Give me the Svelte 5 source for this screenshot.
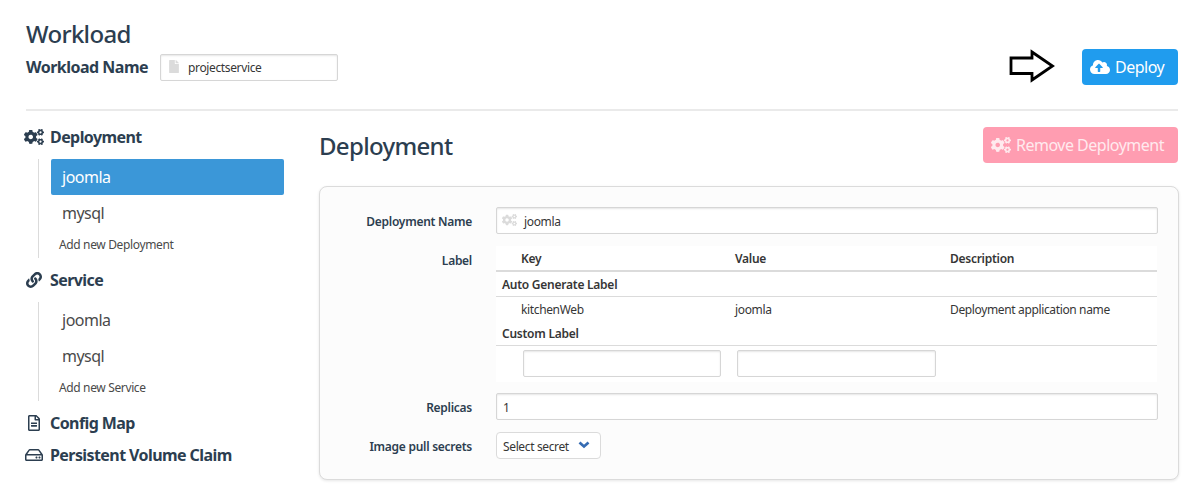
<script>
  const groups = [
    { title: 'Deployment', icon: 'cogs', items: ['joomla', 'mysql'], active: 0 },
    { title: 'Service', icon: 'link', items: ['joomla', 'mysql'], active: -1 }
  ];
</script>

{#snippet cogs()}
  <svg class="cogs" viewBox="0 0 640 512" fill="currentColor" aria-hidden="true">
    {#each [0, 300] as dy}
      <path transform="translate(0 {dy})" d="M512.1 191l-8.2 14.3c-3 5.3-9.4 7.5-15.1 5.4-11.8-4.4-22.6-10.7-32.1-18.6-4.6-3.8-5.8-10.5-2.8-15.7l8.200-14.300c-6.900-8-12.300-17.300-15.900-27.400h-16.500c-6 0-11.200-4.300-12.200-10.300-2-12-2.100-24.600 0-37.100 1-6 6.200-10.400 12.200-10.400h16.500c3.600-10.100 9-19.400 15.900-27.400l-8.200-14.300c-3-5.200-1.900-11.900 2.800-15.700 9.500-7.900 20.400-14.200 32.100-18.600 5.700-2.100 12.100.1 15.100 5.400l8.200 14.300c10.500-1.900 21.200-1.900 31.700 0L552 6.300c3-5.300 9.400-7.500 15.100-5.400 11.800 4.400 22.600 10.700 32.100 18.600 4.600 3.800 5.800 10.500 2.800 15.700l-8.200 14.300c6.900 8 12.300 17.300 15.900 27.400h16.500c6 0 11.200 4.300 12.200 10.300 2 12 2.100 24.600 0 37.100-1 6-6.200 10.400-12.200 10.400h-16.500c-3.600 10.100-9 19.400-15.900 27.400l8.200 14.300c3 5.200 1.900 11.900-2.800 15.700-9.500 7.900-20.400 14.200-32.100 18.600-5.700 2.100-12.100-.1-15.100-5.400l-8.200-14.300c-10.400 1.900-21.200 1.900-31.700 0zm-10.500-58.800c38.500 29.600 82.400-14.300 52.800-52.800-38.500-29.700-82.400 14.300-52.800 52.800z" />
    {/each}
    <path d="M386.300 286.100l33.700 16.800c10.100 5.800 14.500 18.100 10.500 29.100-8.900 24.200-26.400 46.400-42.600 65.800-7.400 8.900-20.200 11.100-30.300 5.300l-29.100-16.800c-16 13.700-34.600 24.600-54.900 31.700v33.600c0 11.600-8.300 21.600-19.700 23.600-24.600 4.200-50.400 4.400-75.900 0-11.500-2-20-11.900-20-23.600V418c-20.300-7.200-38.900-18-54.900-31.700L74 403c-10 5.800-22.900 3.600-30.300-5.300-16.200-19.400-33.300-41.600-42.200-65.700-4-10.900.4-23.200 10.500-29.100l33.300-16.800c-3.900-20.900-3.900-42.400 0-63.400L12 205.800c-10.100-5.800-14.600-18.100-10.500-29 8.900-24.200 26-46.400 42.200-65.800 7.400-8.900 20.200-11.100 30.300-5.300l29.100 16.800c16-13.700 34.600-24.600 54.900-31.700V57.100c0-11.500 8.200-21.500 19.600-23.500 24.600-4.200 50.500-4.400 76-.1 11.500 2 20 11.900 20 23.600v33.600c20.300 7.200 38.900 18 54.900 31.700l29.100-16.800c10-5.800 22.900-3.600 30.300 5.300 16.200 19.400 33.200 41.600 42.100 65.800 4 10.900.1 23.200-10 29.100l-33.700 16.800c3.900 21 3.900 42.500 0 63.500zm-117.600 21.100c59.200-77-28.700-164.900-105.700-105.700-59.200 77 28.700 164.900 105.700 105.700z" />
  </svg>
{/snippet}

{#snippet link()}
  <svg class="link" viewBox="0 0 512 512" fill="currentColor" aria-hidden="true">
    <path d="M326.612 185.391c59.747 59.809 58.927 155.698.36 214.590-.11.12-.24.25-.36.37l-67.200 67.200c-59.270 59.270-155.699 59.262-214.960 0-59.270-59.260-59.270-155.700 0-214.960l37.106-37.106c9.840-9.840 26.786-3.300 27.294 10.606.648 17.722 3.826 35.527 9.690 52.721 1.986 5.822.567 12.262-3.783 16.612l-13.087 13.087c-28.026 28.026-28.905 73.660-1.155 101.960 28.024 28.579 74.086 28.749 102.325.51l67.200-67.190c28.191-28.191 28.073-73.757 0-101.830-3.701-3.694-7.429-6.564-10.341-8.569a16.037 16.037 0 0 1-6.947-12.606c-.396-10.567 3.348-21.456 11.698-29.806l21.054-21.055c5.521-5.521 14.182-6.199 20.584-1.731a152.482 152.482 0 0 1 20.522 17.197zM467.547 44.449c-59.261-59.262-155.690-59.270-214.960 0l-67.200 67.200c-.12.12-.25.25-.36.37-58.566 58.892-59.387 154.781.36 214.590a152.454 152.454 0 0 0 20.521 17.196c6.402 4.468 15.064 3.789 20.584-1.731l21.054-21.055c8.350-8.350 12.094-19.239 11.698-29.806a16.037 16.037 0 0 0-6.947-12.606c-2.912-2.005-6.640-4.875-10.341-8.569-28.073-28.073-28.191-73.639 0-101.830l67.200-67.190c28.239-28.239 74.300-28.069 102.325.51 27.750 28.300 26.872 73.934-1.155 101.960l-13.087 13.087c-4.350 4.350-5.769 10.790-3.783 16.612 5.864 17.194 9.042 34.999 9.690 52.721.509 13.906 17.454 20.446 27.294 10.606l37.106-37.106c59.271-59.259 59.271-155.699.001-214.959z" />
  </svg>
{/snippet}

<div class="page">
  <header>
    <div class="intro">
      <h1>Workload</h1>
      <div class="name-row">
        <span class="name-label">Workload Name</span>
        <div class="field short">
          <svg class="file" viewBox="0 0 384 512" fill="currentColor" aria-hidden="true">
            <path d="M224 136V0H24C10.700 0 0 10.700 0 24v464c0 13.300 10.700 24 24 24h336c13.300 0 24-10.700 24-24V160H248c-13.200 0-24-10.800-24-24zm160-14.100v6.100H256V0h6.100c6.400 0 12.500 2.500 17 7l97.900 98c4.500 4.500 7 10.600 7 16.900z" />
          </svg>
          <span>projectservice</span>
        </div>
      </div>
    </div>
    <svg class="arrow" viewBox="0 0 46 34" aria-hidden="true">
      <path d="M2 9H23V3L43.500 17L23 31V24.500H2Z" fill="#fff" stroke="#000" stroke-width="2.800" />
    </svg>
    <button class="btn deploy">
      <svg class="cloud" viewBox="0 0 640 512" fill="currentColor" aria-hidden="true">
        <path d="M537.600 226.600c4.100-10.700 6.400-22.400 6.400-34.600 0-53-43-96-96-96-19.700 0-38.100 6-53.300 16.200C367 64.200 315.300 32 256 32c-88.400 0-160 71.600-160 160 0 2.700.1 5.400.2 8.100C40.200 219.800 0 273.200 0 336c0 79.500 64.500 144 144 144h368c70.700 0 128-57.300 128-128 0-61.900-44-113.600-102.400-125.400zM393.400 288H328v112c0 8.800-7.200 16-16 16h-48c-8.800 0-16-7.200-16-16V288h-65.400c-14.300 0-21.400-17.200-11.300-27.300l105.400-105.400c6.200-6.200 16.400-6.200 22.600 0l105.400 105.400c10.100 10.100 2.900 27.300-11.300 27.300z" />
      </svg>
      <span>Deploy</span>
    </button>
  </header>

  <div class="columns">
    <nav>
      {#each groups as group}
        <div class="heading">
          <span class="icon">{#if group.icon === 'cogs'}{@render cogs()}{:else}{@render link()}{/if}</span>
          <span>{group.title}</span>
        </div>
        <div class="group">
          {#each group.items as item, i}
            <div class="item" class:active={i === group.active}>{item}</div>
          {/each}
          <div class="add">Add new {group.title}</div>
        </div>
      {/each}
      <div class="heading">
        <span class="icon">
          <svg class="doc" viewBox="0 0 384 512" fill="currentColor" aria-hidden="true">
            <path d="M288 248v28c0 6.600-5.400 12-12 12H108c-6.600 0-12-5.400-12-12v-28c0-6.600 5.400-12 12-12h168c6.600 0 12 5.400 12 12zm-12 72H108c-6.600 0-12 5.400-12 12v28c0 6.600 5.400 12 12 12h168c6.600 0 12-5.400 12-12v-28c0-6.600-5.400-12-12-12zm108-188.100V464c0 26.500-21.500 48-48 48H48c-26.500 0-48-21.500-48-48V48C0 21.500 21.500 0 48 0h204.100C264.800 0 277 5.100 286 14.100L369.900 98c9 8.900 14.100 21.200 14.100 33.900zm-128-80V128h76.100L256 51.900zM336 464V176H232c-13.300 0-24-10.700-24-24V48H48v416h288z" />
          </svg>
        </span>
        <span>Config Map</span>
      </div>
      <div class="heading">
        <span class="icon">
          <svg class="disk" viewBox="0 0 576 512" fill="currentColor" aria-hidden="true">
            <path d="M567.403 235.642L462.323 84.589A48 48 0 0 0 422.919 64H153.081a48 48 0 0 0-39.404 20.589L8.597 235.642A48.001 48.001 0 0 0 0 263.054V400c0 26.510 21.490 48 48 48h480c26.510 0 48-21.490 48-48V263.054c0-9.801-3-19.366-8.597-27.412zM153.081 112h269.838l77.913 112H75.168l77.913-112zM528 400H48V272h480v128zm-32-64c0 17.673-14.327 32-32 32s-32-14.327-32-32 14.327-32 32-32 32 14.327 32 32zm-96 0c0 17.673-14.327 32-32 32s-32-14.327-32-32 14.327-32 32-32 32 14.327 32 32z" />
          </svg>
        </span>
        <span>Persistent Volume Claim</span>
      </div>
    </nav>

    <main>
      <div class="title-row">
        <h1>Deployment</h1>
        <button class="btn remove">{@render cogs()}<span>Remove Deployment</span></button>
      </div>
      <section class="panel">
        <div class="row">
          <div class="label">Deployment Name</div>
          <div class="field wide">{@render cogs()}<span>joomla</span></div>
        </div>
        <div class="row table-row">
          <div class="label">Label</div>
          <div class="table">
            <div class="cells head"><span>Key</span><span>Value</span><span>Description</span></div>
            <div class="section auto">Auto Generate Label</div>
            <div class="cells data"><span>kitchenWeb</span><span>joomla</span><span>Deployment application name</span></div>
            <div class="section custom">Custom Label</div>
            <div class="inputs"><div class="field"></div><div class="field"></div></div>
          </div>
        </div>
        <div class="row">
          <div class="label">Replicas</div>
          <div class="field wide plain"><span>1</span></div>
        </div>
        <div class="row">
          <div class="label">Image pull secrets</div>
          <div class="select">
            <span>Select secret</span>
            <svg class="chevron" viewBox="0 0 12 8" aria-hidden="true"><path d="M1.500 1.400L6 5.500L10.500 1.400" fill="none" stroke="#366cb3" stroke-width="2.700" /></svg>
          </div>
        </div>
      </section>
    </main>
  </div>
</div>

<style>
  :global(body) { background: #fff; }
  .page {
    box-sizing: border-box;
    width: 1197px;
    height: 495px;
    padding: 0 18px 0 26px;
    overflow: hidden;
    font-family: "Noto Sans", "Open Sans", sans-serif;
    font-size: 12px;
    letter-spacing: -0.36px;
    color: #363636;
    white-space: nowrap;
  }
  svg { display: block; flex: none; }
  h1 {
    margin: 0;
    font-size: 24px;
    font-weight: 500;
    line-height: 32px;
    letter-spacing: -0.68px;
    color: #2c3e50;
  }
  header {
    box-sizing: border-box;
    display: flex;
    height: 111px;
    margin-right: 1px;
    padding-top: 18px;
    border-bottom: 2px solid #eaeaea;
  }
  .intro { flex: 1; }
  .name-row { display: flex; align-items: center; height: 27px; margin-top: 4px; }
  .name-label {
    width: 134px;
    margin-top: -2px;
    font-size: 16px;
    font-weight: 700;
    letter-spacing: -0.5px;
    color: #2c3e50;
  }
  .field {
    box-sizing: border-box;
    display: flex;
    align-items: center;
    height: 27px;
    border: 1px solid #d6d6d6;
    border-radius: 2px;
    background: #fff;
    box-shadow: inset 0 1px 2px rgba(10, 10, 10, 0.1);
  }
  .field span { position: relative; top: 1px; }
  .short { width: 178px; }
  .short span { top: 0; }
  .file { width: 10px; height: 13px; margin: -2px 9px 0 8px; color: #dbdbdb; }
  .arrow { width: 46px; height: 34px; margin: 31px 27px 0 0; }
  .btn {
    box-sizing: border-box;
    display: flex;
    align-items: center;
    height: 36px;
    padding: 0 0 0 8px;
    border: 0;
    border-radius: 4px;
    font-family: inherit;
    font-size: 16px;
    letter-spacing: -0.5px;
    color: #fff;
  }
  .deploy { width: 96px; margin-top: 31px; background: #209cee; }
  .cloud { width: 20px; height: 16px; margin-right: 5px; }
  .columns { display: flex; }
  nav { box-sizing: border-box; width: 294px; padding-top: 10px; margin-left: -4px; }
  .heading {
    display: flex;
    align-items: center;
    height: 32px;
    font-size: 16px;
    font-weight: 700;
    letter-spacing: -0.58px;
    color: #2c3e50;
  }
  .icon { display: flex; justify-content: center; width: 23px; margin-right: 5px; }
  .cogs { width: 20px; height: 16px; overflow: visible; }
  .link { width: 16px; height: 16px; }
  .doc { width: 12px; height: 16px; }
  .disk { width: 18px; height: 16px; }
  .group {
    box-sizing: border-box;
    width: 246px;
    height: 99px;
    margin: 6px 0 6px 16px;
    padding-left: 12px;
    border-left: 1px solid #dbdbdb;
  }
  .item {
    height: 36px;
    padding-left: 11px;
    border-radius: 2px;
    font-size: 16px;
    line-height: 36px;
    letter-spacing: -0.5px;
    color: #4a4a4a;
  }
  .active { background: #3b97d8; color: #fff; }
  .add { padding-left: 8px; line-height: 27px; color: #4a4a4a; }
  main { width: 860px; margin-left: 3px; }
  .title-row { display: flex; justify-content: space-between; height: 75px; }
  .title-row h1 { margin-top: 19px; }
  .remove { width: 195px; margin: 16px 1px 0 0; background: #ff9db1; color: #ffeaee; }
  .remove .cogs { margin-right: 5px; }
  .panel {
    box-sizing: border-box;
    height: 294px;
    padding: 20px 20px 0 0;
    border: 1px solid #dbdbdb;
    border-radius: 8px;
    background: #fcfcfc;
    box-shadow: 0 1px 3px rgba(10, 10, 10, 0.1);
  }
  .row { display: flex; height: 27px; margin-bottom: 12px; }
  .label {
    width: 152px;
    margin-right: 24px;
    padding-top: 1px;
    font-weight: 600;
    line-height: 27px;
    letter-spacing: -0.27px;
    text-align: right;
    color: #2c3e50;
  }
  .wide { width: 662px; }
  .wide .cogs { width: 15px; height: 12px; margin: -2px 7px 0 5px; color: #dbdbdb; }
  .plain { padding-left: 6px; }
  .table-row { height: 136px; margin-bottom: 11px; }
  .table { width: 661px; background: #fff; }
  .cells { display: grid; grid-template-columns: 214px 215px 1fr; padding-left: 25px; }
  .head {
    height: 24px;
    border-bottom: 2px solid #dbdbdb;
    font-weight: 600;
    line-height: 25px;
    letter-spacing: -0.27px;
  }
  .section { padding-left: 6px; border-bottom: 1px solid #dbdbdb; font-weight: 600; letter-spacing: -0.25px; }
  .auto { height: 24px; line-height: 26px; }
  .data { height: 25px; line-height: 26px; }
  .custom { height: 23px; line-height: 23px; }
  .inputs { display: flex; gap: 16px; padding: 4px 0 0 27px; }
  .inputs .field { width: 198px; }
  .inputs .field + .field { width: 199px; }
  .select {
    box-sizing: border-box;
    display: flex;
    align-items: center;
    width: 105px;
    height: 27px;
    padding: 1px 0 0 6px;
    border: 1px solid #dbdbdb;
    border-radius: 4px;
    background: #fff;
  }
  .chevron { width: 12px; height: 8px; margin: -2px 0 0 9px; }
</style>
